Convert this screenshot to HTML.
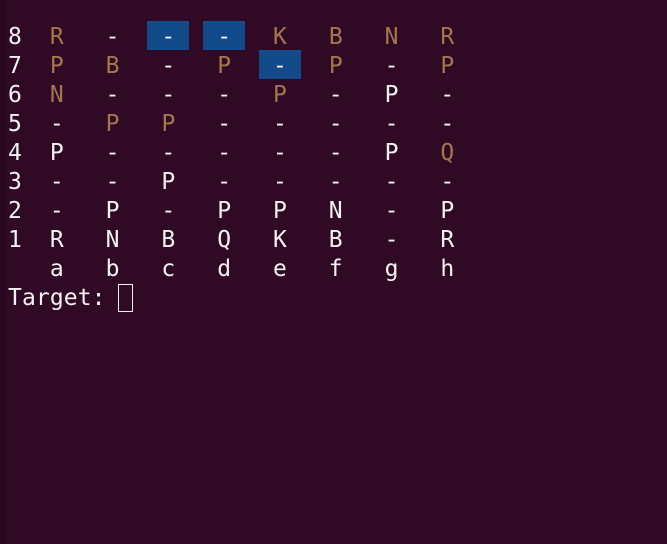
<!DOCTYPE html>
<html><head><style>
html,body{margin:0;padding:0;background:#300a24;width:667px;height:544px;overflow:hidden}
.strip{position:absolute;left:0;top:0;width:6px;height:544px;background:#2a0920}
.h{position:absolute;background:#134b8a;width:42px;height:29px}
pre{position:absolute;left:8px;top:23px;margin:0;font-family:"DejaVu Sans Mono","Liberation Mono",monospace;font-size:23px;line-height:29px;color:#f2f2f2;letter-spacing:0.1px}
.b{color:#a4764e}
.cur{display:inline-block;width:15px;height:28px;border:1px solid #eee;box-sizing:border-box;vertical-align:-7px;margin-left:-2px}
</style></head><body>
<div class="strip"></div>
<div class="h" style="left:147px;top:21px"></div>
<div class="h" style="left:203px;top:21px"></div>
<div class="h" style="left:259px;top:50px"></div>
<pre>8  <span class="b">R</span>   -   -   -   <span class="b">K</span>   <span class="b">B</span>   <span class="b">N</span>   <span class="b">R</span>
7  <span class="b">P</span>   <span class="b">B</span>   -   <span class="b">P</span>   -   <span class="b">P</span>   -   <span class="b">P</span>
6  <span class="b">N</span>   -   -   -   <span class="b">P</span>   -   P   -
5  -   <span class="b">P</span>   <span class="b">P</span>   -   -   -   -   -
4  P   -   -   -   -   -   P   <span class="b">Q</span>
3  -   -   P   -   -   -   -   -
2  -   P   -   P   P   N   -   P
1  R   N   B   Q   K   B   -   R
   a   b   c   d   e   f   g   h
Target: <span class="cur"></span></pre>
</body></html>
